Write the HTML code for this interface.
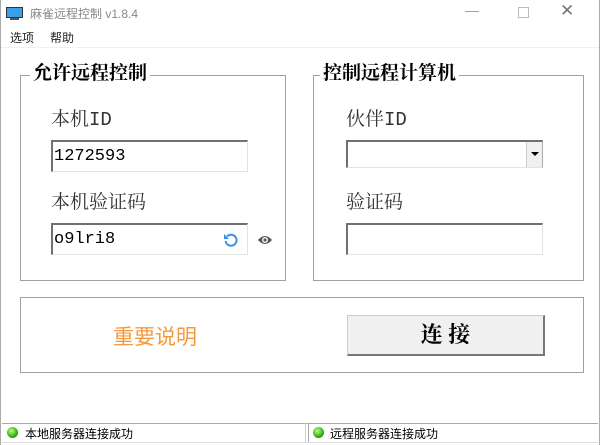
<!DOCTYPE html>
<html><head><meta charset="utf-8"><style>
body{margin:0;width:600px;height:445px;background:#fff;position:relative;overflow:hidden;font-family:"Liberation Sans","Noto Sans CJK SC",sans-serif}
.a{position:absolute}
.serif{font-family:"Liberation Serif","Noto Serif CJK SC",serif}
.mono{font-family:"Liberation Mono","Noto Serif CJK SC",monospace}
.box{position:absolute;border:1px solid #a0a0a0}
.gt{position:absolute;background:#fff;font-weight:bold;font-size:19px;padding:0 3px;color:#000;line-height:22px}
.lbl{position:absolute;font-size:19px;color:#333;line-height:22px}
.inp{position:absolute;background:#fff;border-top:2px solid #707070;border-left:2px solid #707070;border-right:1px solid #e3e3e3;border-bottom:1px solid #e3e3e3;box-sizing:border-box}
</style></head><body>
<div class="a" style="left:0;top:0;width:1px;height:445px;background:#aaa"></div>
<div class="a" style="left:599px;top:0;width:1px;height:445px;background:#aaa"></div>
<svg class="a" style="left:6px;top:7px" width="17" height="14"><rect x="0.5" y="0.5" width="16" height="10" fill="#3aa0e8" stroke="#333"/><rect x="4" y="11" width="9" height="2" fill="#555"/></svg>
<div class="a" style="left:30px;top:5px;font-size:12px;color:#888">麻雀远程控制 v1.8.4</div>
<div class="a" style="left:465px;top:2px;font-size:14px;color:#999">—</div>
<div class="a" style="left:518px;top:7px;width:9px;height:9px;border:1px solid #bbb"></div>
<div class="a" style="left:560px;top:1px;font-size:17px;color:#777">✕</div>
<div class="a" style="left:10px;top:29px;font-size:12px;color:#222">选项</div>
<div class="a" style="left:50px;top:29px;font-size:12px;color:#222">帮助</div>
<div class="a" style="left:1px;top:47px;width:598px;height:1px;background:#f0f0f0"></div>

<div class="box" style="left:20px;top:75px;width:264px;height:204px"></div>
<div class="gt serif" style="left:30px;top:63px">允许远程控制</div>
<div class="lbl serif" style="left:51px;top:109px">本机<span class="mono">ID</span></div>
<div class="inp" style="left:51px;top:140px;width:197px;height:32px"><span class="mono" style="position:absolute;left:1px;top:5px;font-size:17px">1272593</span></div>
<div class="lbl serif" style="left:51px;top:192px">本机验证码</div>
<div class="inp" style="left:51px;top:223px;width:197px;height:32px"><span class="mono" style="position:absolute;left:1px;top:5px;font-size:17px">o9lri8</span>
<svg style="position:absolute;left:170px;top:7px" width="16" height="16" viewBox="0 0 16 16"><path d="M4 4.5A5.5 5.5 0 1 1 2.6 9" fill="none" stroke="#3c8fe8" stroke-width="2"/><path d="M1 2v5h5z" fill="#3c8fe8"/></svg></div>
<svg class="a" style="left:257px;top:234px" width="16" height="12" viewBox="0 0 16 12"><path d="M1 6Q8 -2 15 6Q8 14 1 6z" fill="#555"/><circle cx="8" cy="6" r="3" fill="#fff"/><circle cx="8" cy="6" r="1.6" fill="#555"/></svg>

<div class="box" style="left:313px;top:75px;width:269px;height:204px"></div>
<div class="gt serif" style="left:320px;top:63px">控制远程计算机</div>
<div class="lbl serif" style="left:346px;top:109px">伙伴<span class="mono">ID</span></div>
<div class="inp" style="left:346px;top:140px;width:197px;height:28px;border-right:1px solid #aaa"><div style="position:absolute;right:0;top:0;width:15px;height:25px;background:#f0f0f0;border-left:1px solid #ccc"><div style="position:absolute;left:4px;top:10px;border:4px solid transparent;border-top:4px solid #000"></div></div></div>
<div class="lbl serif" style="left:346px;top:192px">验证码</div>
<div class="inp" style="left:346px;top:223px;width:197px;height:32px"></div>

<div class="box" style="left:20px;top:297px;width:562px;height:74px"></div>
<div class="a" style="left:113px;top:321px;font-size:21px;color:#f59a3c">重要说明</div>
<div class="a" style="left:347px;top:315px;width:198px;height:41px;background:#f0f0f0;border:1px solid #ccc;border-right:2px solid #777;border-bottom:2px solid #777;box-sizing:border-box;text-align:center;line-height:37px;font-size:22px;font-weight:bold" ><span class="serif">连&nbsp;接</span></div>

<div class="a" style="left:2px;top:423px;width:596px;height:1px;background:#aaa"></div>
<div class="a" style="left:305px;top:423px;width:1px;height:20px;background:#ccc"></div>
<div class="a" style="left:308px;top:423px;width:1px;height:20px;background:#aaa"></div>
<div class="a" style="left:2px;top:442px;width:596px;height:1px;background:#ddd"></div>
<div class="a" style="left:7px;top:427px;width:11px;height:11px;border-radius:50%;background:radial-gradient(circle at 40% 35%,#b8ff80,#1ea000 70%,#0a6000)"></div>
<div class="a" style="left:25px;top:425px;font-size:12px;color:#000">本地服务器连接成功</div>
<div class="a" style="left:313px;top:427px;width:11px;height:11px;border-radius:50%;background:radial-gradient(circle at 40% 35%,#b8ff80,#1ea000 70%,#0a6000)"></div>
<div class="a" style="left:330px;top:425px;font-size:12px;color:#000">远程服务器连接成功</div>
</body></html>
